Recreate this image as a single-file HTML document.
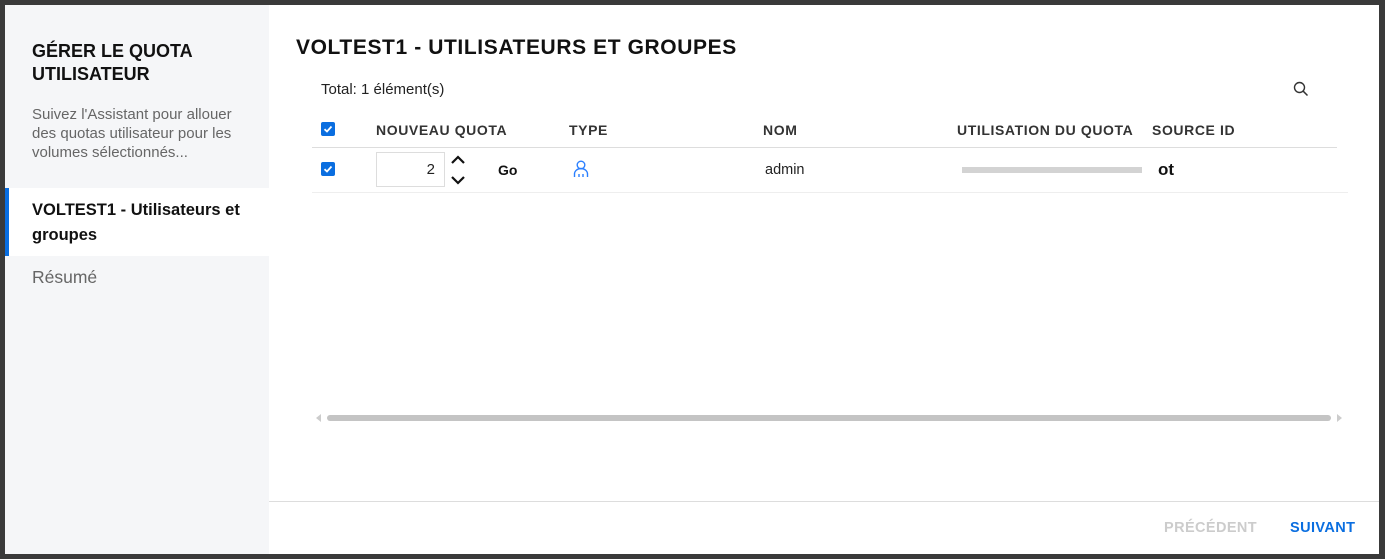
<!DOCTYPE html>
<html><head><meta charset="utf-8"><style>
*{margin:0;padding:0;box-sizing:border-box}
body{width:1385px;height:559px;background:#3a3a3a;font-family:"Liberation Sans",Arial,sans-serif;position:relative;overflow:hidden}
.a{position:absolute}
.dlg{left:5px;top:5px;width:1374px;height:549px;background:#fff}
.side{left:5px;top:5px;width:264px;height:549px;background:#f5f6f8}
.h{font-weight:bold;letter-spacing:.6px;font-size:14px;color:#333}
.cb{width:14px;height:14px;background:#0a6ee0;border-radius:2px}
</style></head><body>
<div class="a dlg"></div>
<div class="a side"></div>
<div class="a" style="left:32px;top:40px;font-size:18px;font-weight:bold;line-height:23px;color:#111">GÉRER LE QUOTA<br>UTILISATEUR</div>
<div class="a" style="left:32px;top:105px;font-size:15px;line-height:19px;color:#666">Suivez l'Assistant pour allouer<br>des quotas utilisateur pour les<br>volumes sélectionnés...</div>
<div class="a" style="left:5px;top:188px;width:264px;height:68px;background:#fff;border-left:4px solid #0a6ee0"></div>
<div class="a" style="left:32px;top:198px;font-size:16.5px;font-weight:bold;line-height:25px;color:#111">VOLTEST1 - Utilisateurs et<br>groupes</div>
<div class="a" style="left:32px;top:267px;font-size:17.5px;color:#666">Résumé</div>

<div class="a" style="left:296px;top:36px;font-size:21px;font-weight:bold;color:#111;letter-spacing:.6px">VOLTEST1 - UTILISATEURS ET GROUPES</div>
<div class="a" style="left:321px;top:81px;font-size:15px;color:#222">Total: 1 élément(s)</div>
<svg class="a" style="left:1293px;top:81px" width="16" height="16" viewBox="0 0 16 16"><circle cx="6.5" cy="6.5" r="5" fill="none" stroke="#333" stroke-width="1.4"/><path d="M10.2 10.2L14.5 14.5" stroke="#333" stroke-width="1.5"/></svg>

<div class="a cb" style="left:321px;top:122px"></div>
<svg class="a" style="left:321px;top:122px" width="14" height="14"><path d="M3.5 7.2L6 9.5L10.5 4.5" fill="none" stroke="#fff" stroke-width="1.8"/></svg>
<div class="a h" style="left:376px;top:122px">NOUVEAU QUOTA</div>
<div class="a h" style="left:569px;top:122px">TYPE</div>
<div class="a h" style="left:763px;top:122px">NOM</div>
<div class="a h" style="left:957px;top:122px">UTILISATION DU QUOTA</div>
<div class="a h" style="left:1152px;top:122px">SOURCE ID</div>
<div class="a" style="left:312px;top:147px;width:1025px;height:1px;background:#ddd"></div>

<div class="a cb" style="left:321px;top:162px"></div>
<svg class="a" style="left:321px;top:162px" width="14" height="14"><path d="M3.5 7.2L6 9.5L10.5 4.5" fill="none" stroke="#fff" stroke-width="1.8"/></svg>
<div class="a" style="left:376px;top:152px;width:69px;height:35px;border:1px solid #ddd;text-align:right;padding:8px 9px 0 0;font-size:15px;color:#222">2</div>
<svg class="a" style="left:449px;top:154px" width="18" height="32"><path d="M3 9L9 3L15 9M3 23L9 29L15 23" fill="none" stroke="#111" stroke-width="2.2"/></svg>
<div class="a" style="left:498px;top:162px;font-size:14px;font-weight:bold;color:#111">Go</div>
<svg class="a" style="left:573px;top:160px" width="16" height="18" viewBox="0 0 16 18"><circle cx="8" cy="5" r="3.8" fill="none" stroke="#2a7fff" stroke-width="1.4"/><path d="M1.5 17V14A6.5 5.5 0 0 1 14.5 14V17M6 17V14M10 17V14" fill="none" stroke="#2a7fff" stroke-width="1.4"/></svg>
<div class="a" style="left:765px;top:162px;font-size:14.5px;color:#222">admin</div>
<div class="a" style="left:962px;top:167px;width:180px;height:6px;background:#d3d3d3"></div>
<div class="a" style="left:1158px;top:160px;font-size:17px;font-weight:bold;color:#111">ot</div>
<div class="a" style="left:312px;top:192px;width:1036px;height:1px;background:#eee"></div>

<svg class="a" style="left:316px;top:414px" width="6" height="8"><path d="M5 0L0 4L5 8Z" fill="#ccc"/></svg>
<div class="a" style="left:327px;top:415px;width:1004px;height:6px;border-radius:3px;background:#c4c4c4"></div>
<svg class="a" style="left:1337px;top:414px" width="6" height="8"><path d="M0 0L5 4L0 8Z" fill="#ccc"/></svg>

<div class="a" style="left:269px;top:501px;width:1110px;height:1px;background:#ddd"></div>
<div class="a" style="left:1164px;top:520px;font-size:14.5px;font-weight:bold;letter-spacing:.4px;color:#ccc">PRÉCÉDENT</div>
<div class="a" style="left:1290px;top:520px;font-size:14.5px;font-weight:bold;letter-spacing:.4px;color:#0a6ee0">SUIVANT</div>
</body></html>
